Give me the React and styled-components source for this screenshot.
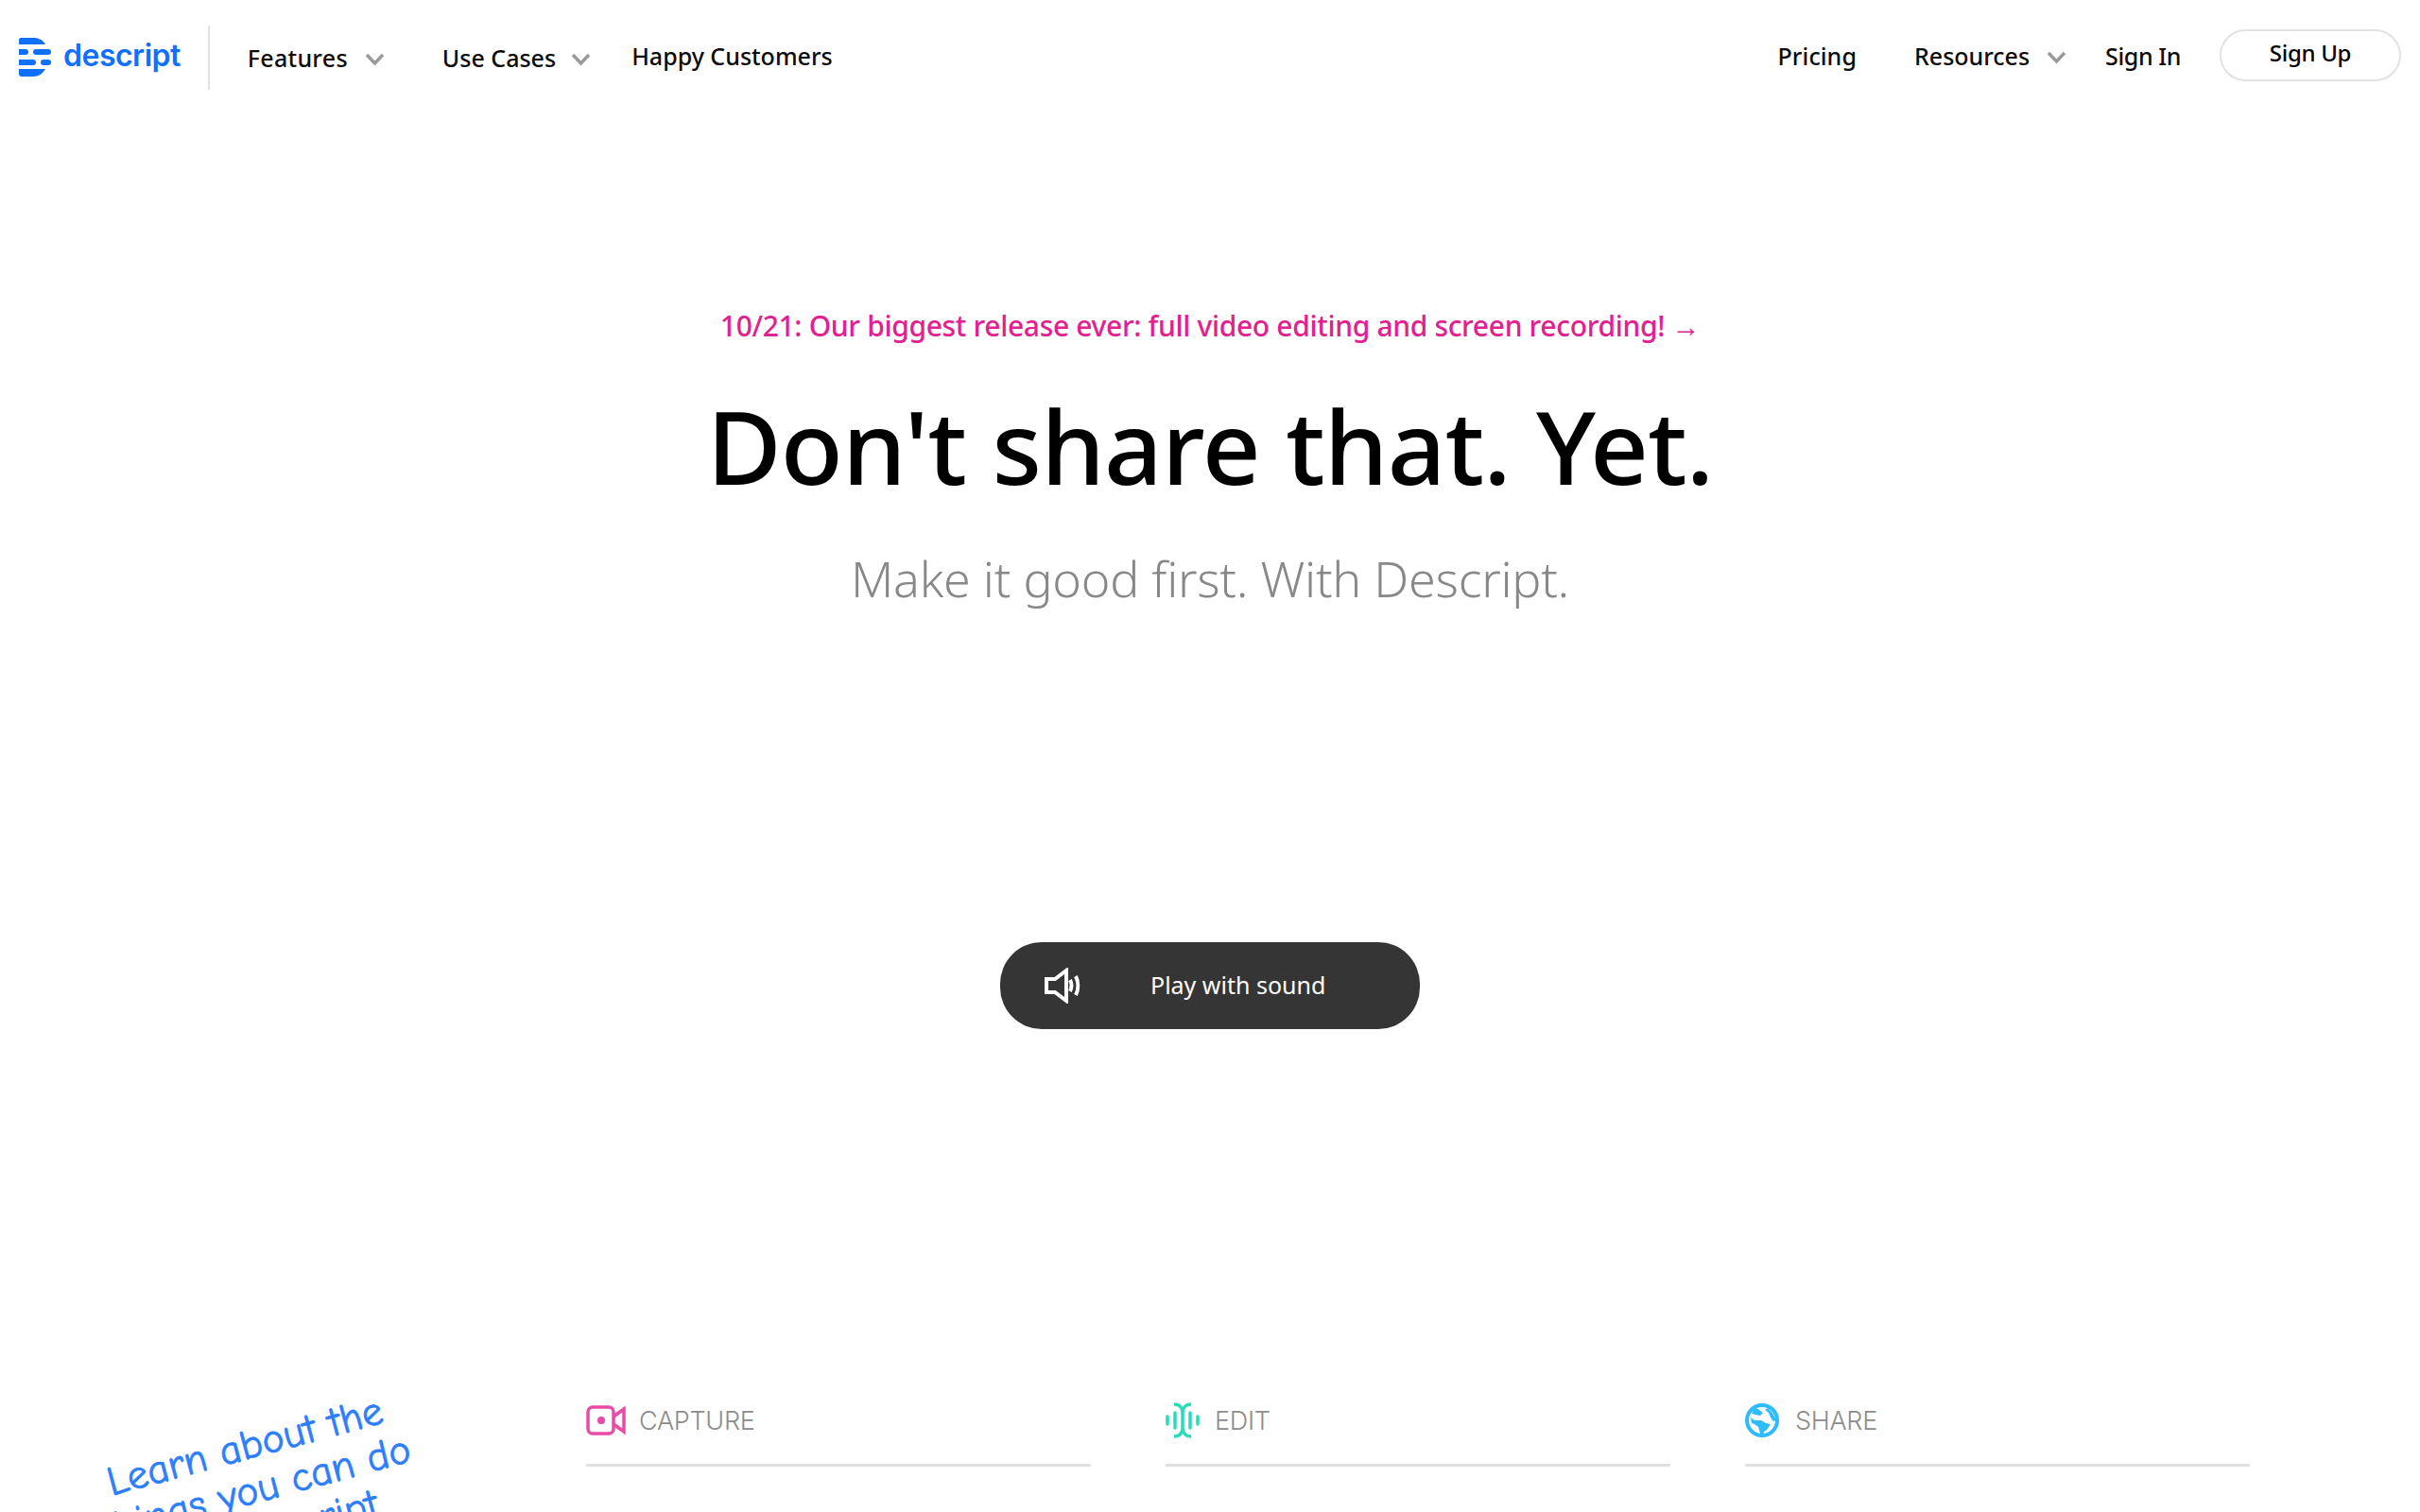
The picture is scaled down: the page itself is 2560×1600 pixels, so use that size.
import React from 'react'
import styled, { createGlobalStyle } from 'styled-components'

const GlobalStyle = createGlobalStyle`
  html, body {
    margin: 0;
    padding: 0;
    background: #fff;
  }
  body {
    font-family: "Noto Sans", "Open Sans", sans-serif;
    color: #000;
  }
`

const Page = styled.div`
  height: 1600px;
  overflow: hidden;
  display: flex;
  flex-direction: column;
`

const Nav = styled.nav`
  display: flex;
  align-items: center;
  height: 120px;
  padding: 0 20px 0 19px;
  box-sizing: border-box;
`

const LogoLink = styled.a`
  display: flex;
  align-items: center;
  gap: 12px;
  height: 68px;
  padding-right: 29px;
  border-right: 2px solid #e2e2e2;
  margin-right: 40px;
  margin-top: 1px;
`

const LogoText = styled.span`
  font-family: Inter, sans-serif;
  font-size: 32px;
  font-weight: 560;
  letter-spacing: -0.5px;
  color: #0f6fff;
  margin-top: -4px;
`

const NavItem = styled.a`
  display: flex;
  align-items: center;
  font-size: 25px;
  font-weight: 500;
  letter-spacing: ${p => p.$spacing || 0}px;
  white-space: nowrap;
  color: #0b0b0b;
  margin-left: ${p => p.$left || 0}px;
  margin-top: ${p => p.$top || -2}px;
`

const Chevron = styled.svg`
  width: 21px;
  height: 14px;
  margin-left: ${p => p.$left || 18}px;
  margin-top: 4px;
`

const RightGroup = styled.div`
  display: flex;
  align-items: center;
  margin-left: auto;
`

const SignUp = styled.a`
  display: flex;
  align-items: center;
  justify-content: center;
  width: 192px;
  height: 55px;
  box-sizing: border-box;
  border: 2px solid #e2e2e2;
  border-radius: 28px;
  padding-bottom: 6px;
  margin-left: 41px;
  margin-top: -3px;
  font-size: 24px;
  font-weight: 500;
  letter-spacing: -0.3px;
`

const Hero = styled.section`
  display: flex;
  flex-direction: column;
  align-items: center;
  padding-top: 202px;
`

const Announcement = styled.a`
  font-size: 30px;
  font-weight: 500;
  line-height: 46px;
  letter-spacing: -0.33px;
  color: #e0218f;
`

const Heading = styled.h1`
  margin: 39px 0 0;
  font-size: 108px;
  font-weight: 500;
  line-height: 130px;
  letter-spacing: -0.8px;
  color: #000;
`

const Subheading = styled.p`
  margin: 40px 0 0;
  font-size: 52px;
  font-weight: 300;
  line-height: 70px;
  letter-spacing: -0.25px;
  color: #888;
`

const PlayButton = styled.button`
  display: flex;
  align-items: center;
  width: 444px;
  height: 92px;
  margin-top: 350px;
  padding: 0 0 0 47px;
  border: 0;
  border-radius: 44px;
  background: #353535;
  color: #fff;
  font-family: inherit;
  font-size: 25px;
`

const PlayLabel = styled.span`
  margin-left: 72px;
  margin-top: -2px;
`

const Sections = styled.section`
  position: relative;
  display: grid;
  grid-template-columns: repeat(3, 534px);
  column-gap: 79px;
  padding: 382px 0 0 620px;
`

const Note = styled.div`
  position: absolute;
  left: 101px;
  top: 416px;
  width: 340px;
  transform: rotate(-15deg);
  text-align: center;
  font-family: "Comic Sans MS", "Comic Neue", cursive;
  font-size: 44px;
  line-height: 47px;
  color: #2c7efb;
  -webkit-text-stroke: 0.7px #2c7efb;
`

const SectionHead = styled.div`
  display: flex;
  align-items: center;
  gap: 14px;
  height: 64px;
  padding-bottom: 14px;
  border-bottom: 3px solid #e0e0e0;
`

const SectionTitle = styled.span`
  font-family: Inter, sans-serif;
  font-size: 27px;
  font-weight: 300;
  letter-spacing: -0.3px;
  color: #8c8c8c;
`

const LogoMark = () => (
  <svg width="36" height="42" viewBox="0 0 36 42" fill="#0f6fff">
    <path d="M1 2c0-1 1-2 2-2h13c6 0 10 2 13 7H1z" />
    <path d="M1 12h7c2 0 3 1 3 3s-1 3-3 3H1zM16 15c0-2 1-3 3-3h13c2 0 3 1 3 3s-1 3-3 3H19c-2 0-3-1-3-3z" />
    <path d="M1 23h15c2 0 3 1 3 3s-1 3-3 3H1zM24 26c0-2 1-3 3-3h5c2 0 3 1 3 3s-1 3-3 3h-5c-2 0-3-1-3-3z" />
    <path d="M1 33h28c-3 5-7 8-13 8H4c-2 0-3-1-3-3z" />
  </svg>
)

const Caret = ({ left }) => (
  <Chevron $left={left} viewBox="0 0 21 14">
    <path d="M2 2l8.500 9 8.500-9" fill="none" stroke="#999" strokeWidth="3.400" />
  </Chevron>
)

const SpeakerIcon = () => (
  <svg width="40" height="38" viewBox="0 0 40 38">
    <path d="M2 12h9L23 3v32L11 26H2z" fill="none" stroke="#fff" strokeWidth="4" />
    <path d="M27 13c2 4 2 8 0 12M33 9c3 6 3 14 0 20" fill="none" stroke="#fff" strokeWidth="4" />
  </svg>
)

const CaptureIcon = () => (
  <svg width="42" height="34" viewBox="0 0 42 34">
    <rect x="2" y="3" width="27" height="28" rx="5" fill="none" stroke="#e84ba8" strokeWidth="3.500" />
    <circle cx="16" cy="17" r="4" fill="#e84ba8" />
    <path d="M29 13l11-8v24l-11-8" fill="none" stroke="#e84ba8" strokeWidth="3.500" />
  </svg>
)

const EditIcon = () => (
  <svg width="38" height="38" viewBox="0 0 38 38">
    <g fill="none" stroke="#2bdcbc" strokeWidth="3.500">
      <path d="M9 2c6 0 9 4 9 9v16c0 5-3 9-9 9M27 2c-6 0-9 4-9 9v16c0 5 3 9 9 9" />
      <path strokeLinecap="round" d="M2 15v8M10 11v16M26 11v16M34 15v8" />
    </g>
  </svg>
)

const ShareIcon = () => (
  <svg width="39" height="38" viewBox="0 0 39 38">
    <circle cx="18" cy="19" r="16" fill="#fff" stroke="#2dbcff" strokeWidth="4" />
    <path fill="#2dbcff" d="M6 16l4 3 7 0 5 3 5 1-4 6-3 2-1 5-3-3-2-7-4-3-3-1z" />
    <path fill="#2dbcff" d="M10 5l5 3 4 3-3 3-5-1-4-1zM24 6l5 5 4 8-3 1-3-4-2-5-4-3z" />
  </svg>
)

const App = () => (
  <Page>
    <GlobalStyle />
    <Nav>
      <LogoLink>
        <LogoMark />
        <LogoText>descript</LogoText>
      </LogoLink>
      <NavItem $top={1} $spacing={0.3}>Features<Caret /></NavItem>
      <NavItem $left={61} $top={1}>Use Cases<Caret left={16} /></NavItem>
      <NavItem $left={43}>Happy Customers</NavItem>
      <RightGroup>
        <NavItem $spacing={0.1}>Pricing</NavItem>
        <NavItem $left={61}>Resources<Caret /></NavItem>
        <NavItem $left={41} $spacing={-0.4}>Sign In</NavItem>
        <SignUp>Sign Up</SignUp>
      </RightGroup>
    </Nav>
    <Hero>
      <Announcement>10/21: Our biggest release ever: full video editing and screen recording! →</Announcement>
      <Heading>Don't share that. Yet.</Heading>
      <Subheading>Make it good first. With Descript.</Subheading>
      <PlayButton>
        <SpeakerIcon />
        <PlayLabel>Play with sound</PlayLabel>
      </PlayButton>
    </Hero>
    <Sections>
      <Note>Learn about the things you can do with Descript</Note>
      <SectionHead><CaptureIcon /><SectionTitle>CAPTURE</SectionTitle></SectionHead>
      <SectionHead><EditIcon /><SectionTitle>EDIT</SectionTitle></SectionHead>
      <SectionHead><ShareIcon /><SectionTitle>SHARE</SectionTitle></SectionHead>
    </Sections>
  </Page>
)

export default App
